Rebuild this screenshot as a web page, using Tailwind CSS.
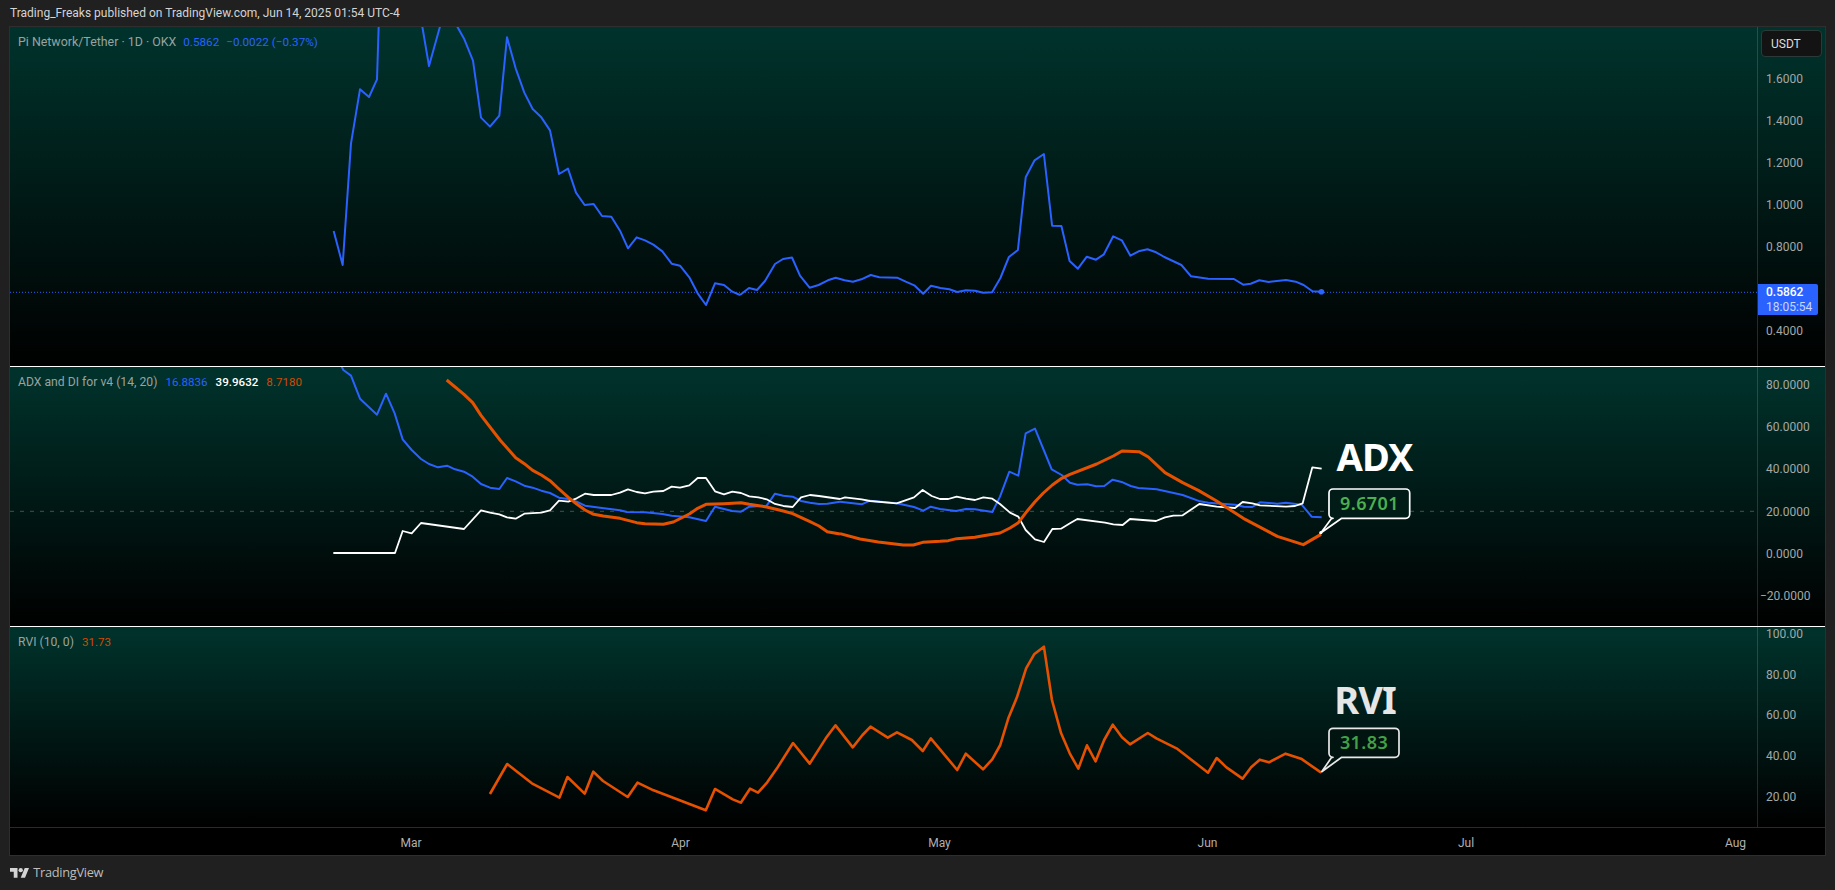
<!DOCTYPE html>
<html lang="en">
<head>
<meta charset="utf-8">
<title>Pi Network/Tether</title>
<script src="https://cdn.jsdelivr.net/npm/@tailwindcss/browser@4"></script>
</head>
<body class="bg-[#202020] overflow-hidden font-['Roboto',sans-serif]">
<div class="w-[1835px] h-[890px] flex flex-col">
  <header class="h-[26px] flex items-center pl-[10px] text-[12px] text-[#d4d4d4]">Trading_Freaks published on TradingView.com, Jun 14, 2025 01:54 UTC-4</header>
  <main class="ml-[9px] w-[1817px] h-[830px] border border-[#2e2e2e] flex flex-col bg-black">

    <!-- price pane -->
    <section class="h-[339px] flex overflow-hidden bg-linear-to-b/srgb from-[#00332c] to-black">
      <div class="relative w-[1747px]">
        <svg class="absolute inset-0" width="1747" height="339" viewBox="10 27 1747 339" fill="none" stroke-linejoin="round">
          <line x1="10" y1="292.3" x2="1757" y2="292.3" stroke="#2962ff" stroke-width="1" stroke-dasharray="1 2"/>
          <g transform="translate(320 0) scale(.33333)">
            <polyline vector-effect="non-scaling-stroke" stroke="#2962ff" stroke-width="2" points="41,693 68,795 93,430 120,268 147,291 171,238 198,-615 301,45 327,198 378,15 392,-30 412,80 433,118 459,182 483,353 510,380 538,347 561,112 587,205 613,278 638,327 664,352 690,391 717,522 744,506 768,578 794,615 821,612 846,648 874,650 900,692 924,745 950,712 975,721 1000,734 1027,754 1055,791 1080,797 1108,832 1133,880 1158,915 1185,850 1212,855 1237,875 1260,885"/>
          </g>
          <polyline stroke="#2962ff" stroke-width="2" points="740,295 749,288 757,290 765,281 775,264 783,259 792,257.5 800,275.7 809.6,287.7 818.6,285 827.9,280.3 835.7,277.7 844.6,280.3 852.9,281.7 861.4,279.3 870.7,275 879.3,277.3 897.1,277.7 905.7,281.7 914.3,285.3 923.2,293.7 931,285.7 940.4,288 949.3,289.3 957.1,292 966,290.3 975,290.7 983.2,292.7 992.1,292.3 1000.4,278 1008.9,257 1017.9,250 1025.7,177.3 1034.6,160.3 1043.9,154 1052.1,225.7 1061.4,226 1069.6,261 1077.9,268.7 1086.8,256.7 1096,259.7 1103.9,254.3 1113.2,236.3 1121.8,240.3 1130.4,255.7 1138.6,251.3 1147.5,249.3 1156.1,252.3 1164.3,257 1181.4,265 1191.1,276.3 1208.2,278.7 1233.9,279 1243.2,284.7 1250.7,283.7 1259.3,280.3 1268.6,282 1286.1,280 1295.7,281.7 1303.6,285 1312.5,291.3 1321.4,291.7"/>
          <circle cx="1321.4" cy="291.7" r="2.8" fill="#2962ff"/>
        </svg>
        <div class="absolute left-[8px] top-[7px] flex items-baseline gap-[7px] text-[11.7px] leading-[16px] text-[#2962ff] whitespace-nowrap">
          <span class="text-[12.4px] text-[#98a3a1]">Pi Network/Tether · 1D · OKX</span>
          <span>0.5862</span>
          <span>−0.0022 (−0.37%)</span>
        </div>
      </div>
      <div class="relative w-[68px] border-l border-white/15 pl-[8px] pt-[31px] text-[12px] text-[#a3a8a7]">
        <div class="absolute left-[3px] top-[3px] w-[61px] h-[27px] rounded-[4px] border border-[#2c3a37] bg-[#131313] text-[#dddddd] flex items-center pl-[9px]">USDT</div>
        <div class="h-[42px] flex items-center">1.6000</div>
        <div class="h-[42px] flex items-center">1.4000</div>
        <div class="h-[42px] flex items-center">1.2000</div>
        <div class="h-[42px] flex items-center">1.0000</div>
        <div class="h-[42px] flex items-center">0.8000</div>
        <div class="h-[42px]"></div>
        <div class="h-[42px] flex items-center">0.4000</div>
        <div class="absolute left-0 top-[257px] w-[60px] h-[31px] bg-[#2962ff] rounded-r-[2px] pl-[8px] flex flex-col justify-center leading-[14.5px]">
          <span class="text-white font-medium">0.5862</span>
          <span class="text-[#c9d6ff]">18:05:54</span>
        </div>
      </div>
    </section>
    <div class="h-px bg-white"></div>

    <!-- ADX pane -->
    <section class="h-[259px] flex overflow-hidden bg-linear-to-b/srgb from-[#00332c] to-black">
      <div class="relative w-[1747px]">
        <svg class="absolute inset-0" width="1747" height="259" viewBox="10 367 1747 259" fill="none" stroke-linejoin="round">
          <line x1="10" y1="511.3" x2="1757" y2="511.3" stroke="#41524f" stroke-width="1" stroke-dasharray="4 6"/>
          <g transform="translate(320 360) scale(.33333)">
            <polyline vector-effect="non-scaling-stroke" stroke="#2962ff" stroke-width="2" points="50,0 65,20 70,30 93,47 120,116 171,164 198,101 224,160 248,238 275,270 303,297 327,312 354,322 381,317 405,328 432,335 458,350 483,372 510,383 538,387 561,354 587,364 613,377 638,383 664,392 690,399 717,413 745,417 770,425 795,437 846,444 900,451 921,456 975,457 1027,462 1055,467 1108,472 1158,483 1185,440 1212,447 1237,453 1263,455 1288,440 1340,437 1365,401 1390,407 1418,410 1443,423 1470,428 1497,432 1522,431 1560,425"/>
          </g>
          <g transform="translate(840 360) scale(.33333)">
            <polyline vector-effect="non-scaling-stroke" stroke="#2962ff" stroke-width="2" points="0,425 65,433 90,422 170,430 222,441 250,452 272,440 300,447 348,453 378,447 405,448 457,456 480,410 508,335 535,347 557,220 585,206 610,267 635,328 665,345 690,368 712,374 742,373 768,379 793,378 818,359 848,367 872,378 895,384 950,388 1028,405 1080,424 1105,428 1185,434 1212,440 1237,441 1260,427 1312,431 1338,428 1385,434 1415,470 1445,472"/>
          </g>
          <g transform="translate(320 360) scale(.33333)">
            <polyline vector-effect="non-scaling-stroke" stroke="#ffffff" stroke-width="1.8" points="40,579 225,579 248,513 275,520 303,489 432,507 483,451 510,458 538,463 561,472 587,476 613,461 664,458 690,451 717,422 745,425 770,415 795,401 821,405 874,405 900,398 924,388 950,396 975,400 1000,395 1030,393 1055,380 1080,383 1108,376 1133,354 1158,354 1185,394 1212,403 1237,395 1263,399 1288,409 1315,412 1340,418 1365,432 1390,438 1418,441 1443,412 1470,405 1497,408 1560,417"/>
          </g>
          <g transform="translate(840 360) scale(.33333)">
            <polyline vector-effect="non-scaling-stroke" stroke="#ffffff" stroke-width="1.8" points="0,417 15,412 65,418 90,423 170,430 222,412 248,390 275,408 300,417 325,417 350,410 378,416 405,420 430,412 457,416 480,432 510,458 535,470 557,510 585,538 612,546 637,507 663,506 690,490 712,477 795,488 820,493 848,495 870,477 948,483 975,472 1000,467 1028,466 1078,432 1130,440 1185,444 1208,426 1237,430 1260,436 1338,440 1365,438 1388,430 1417,322 1445,326"/>
          </g>
          <g transform="translate(320 360) scale(.33333)">
            <polyline vector-effect="non-scaling-stroke" stroke="#e65100" stroke-width="3" points="380,60 432,103 458,128 483,166 540,240 587,293 613,311 638,331 664,345 690,362 717,387 745,412 770,432 795,450 821,463 850,468 900,475 950,488 975,491 1030,493 1060,486 1108,462 1133,445 1158,433 1212,431 1263,428 1288,433 1340,441 1390,453 1418,461 1470,485 1497,498 1522,515 1560,522"/>
          </g>
          <g transform="translate(840 360) scale(.33333)">
            <polyline vector-effect="non-scaling-stroke" stroke="#e65100" stroke-width="3" points="0,521 60,537 115,546 190,555 220,555 248,547 300,544 325,542 350,536 405,532 430,527 480,519 510,504 535,488 560,455 585,425 610,399 637,375 665,355 690,343 770,312 820,288 846,273 897,275 925,291 975,338 1028,368 1075,391 1130,423 1210,475 1312,529 1390,554 1443,523"/>
          </g>
          <path d="M1333 489H1405.7a4 4 0 0 1 4 4V514.3a4 4 0 0 1 -4 4H1341.7L1321 532.7L1331.7 518.3H1333a4 4 0 0 1 -4 -4V493a4 4 0 0 1 4 -4Z" fill="#011c17" stroke="#ffffff" stroke-width="1.7" stroke-linejoin="round"/>
          <circle cx="1320.8" cy="532.7" r="1.6" fill="#ffffff"/>
        </svg>
        <div class="absolute left-[8px] top-[7px] flex items-baseline gap-[8px] text-[11.6px] leading-[16px] whitespace-nowrap">
          <span class="text-[12.2px] text-[#98a3a1]">ADX and DI for v4 (14, 20)</span>
          <span class="text-[#2962ff]">16.8836</span>
          <span class="text-white font-medium">39.9632</span>
          <span class="text-[#d14a00]">8.7180</span>
        </div>
        <div class="absolute left-[1322px] top-[70px] w-[85px] text-center text-[38px] leading-[38px] font-bold tracking-[-1px] text-white font-['Noto_Sans',sans-serif]">ADX</div>
        <div class="absolute left-[1319px] top-[122px] w-[81px] h-[29px] flex items-center justify-center text-[18px] font-semibold tracking-[0.4px] text-[#4caf50] font-['Noto_Sans',sans-serif]">9.6701</div>
      </div>
      <div class="w-[68px] border-l border-white/15 pl-[8px] -mt-[3.5px] text-[12px] text-[#a3a8a7]">
        <div class="h-[42.35px] flex items-center">80.0000</div>
        <div class="h-[42.35px] flex items-center">60.0000</div>
        <div class="h-[42.35px] flex items-center">40.0000</div>
        <div class="h-[42.35px] flex items-center">20.0000</div>
        <div class="h-[42.35px] flex items-center">0.0000</div>
        <div class="h-[42.35px] flex items-center -ml-[6px]">−20.0000</div>
      </div>
    </section>
    <div class="h-px bg-white"></div>

    <!-- RVI pane -->
    <section class="h-[200px] flex overflow-hidden bg-linear-to-b/srgb from-[#00332c] to-black">
      <div class="relative w-[1747px]">
        <svg class="absolute inset-0" width="1747" height="200" viewBox="10 627 1747 200" fill="none" stroke-linejoin="round">
          <g transform="translate(440 620) scale(.57405 .33333)">
            <polyline vector-effect="non-scaling-stroke" stroke="#e65100" stroke-width="2.6" points="87,522 117,432 160,490 208,533 222,471 252,521 267,455 284,483 327,531 344,488 372,511 463,571 479,507 510,538 524,548 540,506 554,518 570,487 587,445 615,369 644,431 672,355 689,316 719,382 736,345 750,320 780,353 796,337 822,360 841,393 855,355 901,450 916,401 946,448 962,418 976,375 990,295 1005,232 1021,145 1035,103 1052,80 1066,240 1082,340 1097,400 1112,446 1127,376 1142,424 1157,360 1172,314 1188,352 1202,373 1233,339 1248,355 1283,385 1338,458 1353,414 1370,442 1398,476 1413,442 1428,419 1444,427 1473,401 1500,416 1535,458"/>
          </g>
          <path d="M1333 728.3H1395a4 4 0 0 1 4 4V753.3a4 4 0 0 1 -4 4H1341.7L1321.7 771.7L1331.7 757.3H1333a4 4 0 0 1 -4 -4V732.3a4 4 0 0 1 4 -4Z" fill="#01140f" stroke="#e8e8e8" stroke-width="1.7" stroke-linejoin="round"/>
        </svg>
        <div class="absolute left-[8px] top-[7px] flex items-baseline gap-[8px] text-[11.6px] leading-[16px] whitespace-nowrap">
          <span class="text-[12.2px] text-[#98a3a1]">RVI (10, 0)</span>
          <span class="text-[#d14a00]">31.73</span>
        </div>
        <div class="absolute left-[1322px] top-[53px] w-[66px] text-center text-[38px] leading-[38px] font-bold tracking-[-1px] text-[#e6e6e6] font-['Noto_Sans',sans-serif]">RVI</div>
        <div class="absolute left-[1319px] top-[101px] w-[70px] h-[29px] flex items-center justify-center text-[18px] font-semibold tracking-[0.4px] text-[#43a047] font-['Noto_Sans',sans-serif]">31.83</div>
      </div>
      <div class="w-[68px] border-l border-white/15 pl-[8px] -mt-[13.4px] text-[12px] text-[#a3a8a7]">
        <div class="h-[40.75px] flex items-center">100.00</div>
        <div class="h-[40.75px] flex items-center">80.00</div>
        <div class="h-[40.75px] flex items-center">60.00</div>
        <div class="h-[40.75px] flex items-center">40.00</div>
        <div class="h-[40.75px] flex items-center">20.00</div>
      </div>
    </section>

    <!-- time axis -->
    <footer class="relative h-[28px] border-t border-[#2a2a2a] bg-black text-[12px] text-[#b0b0b0]">
      <span class="absolute left-[401px] top-[5.5px] -translate-x-1/2">Mar</span>
      <span class="absolute left-[670.5px] top-[5.5px] -translate-x-1/2">Apr</span>
      <span class="absolute left-[929.5px] top-[5.5px] -translate-x-1/2">May</span>
      <span class="absolute left-[1197.5px] top-[5.5px] -translate-x-1/2">Jun</span>
      <span class="absolute left-[1456px] top-[5.5px] -translate-x-1/2">Jul</span>
      <span class="absolute left-[1725.5px] top-[5.5px] -translate-x-1/2">Aug</span>
    </footer>
  </main>
  <div class="h-[34px] flex items-center gap-[4px] pl-[10px]">
    <svg width="19.3" height="9.7" viewBox="0 4 36 18" fill="#d4d4d4"><path d="M14 22H7V11H0V4h14v18zM28 22h-8l7.5-18h8L28 22z"/><circle cx="20" cy="8" r="4"/></svg>
    <span class="text-[12.8px] text-[#bdbdbd] font-['Open_Sans',sans-serif] tracking-[-0.3px]">TradingView</span>
  </div>
</div>
</body>
</html>
